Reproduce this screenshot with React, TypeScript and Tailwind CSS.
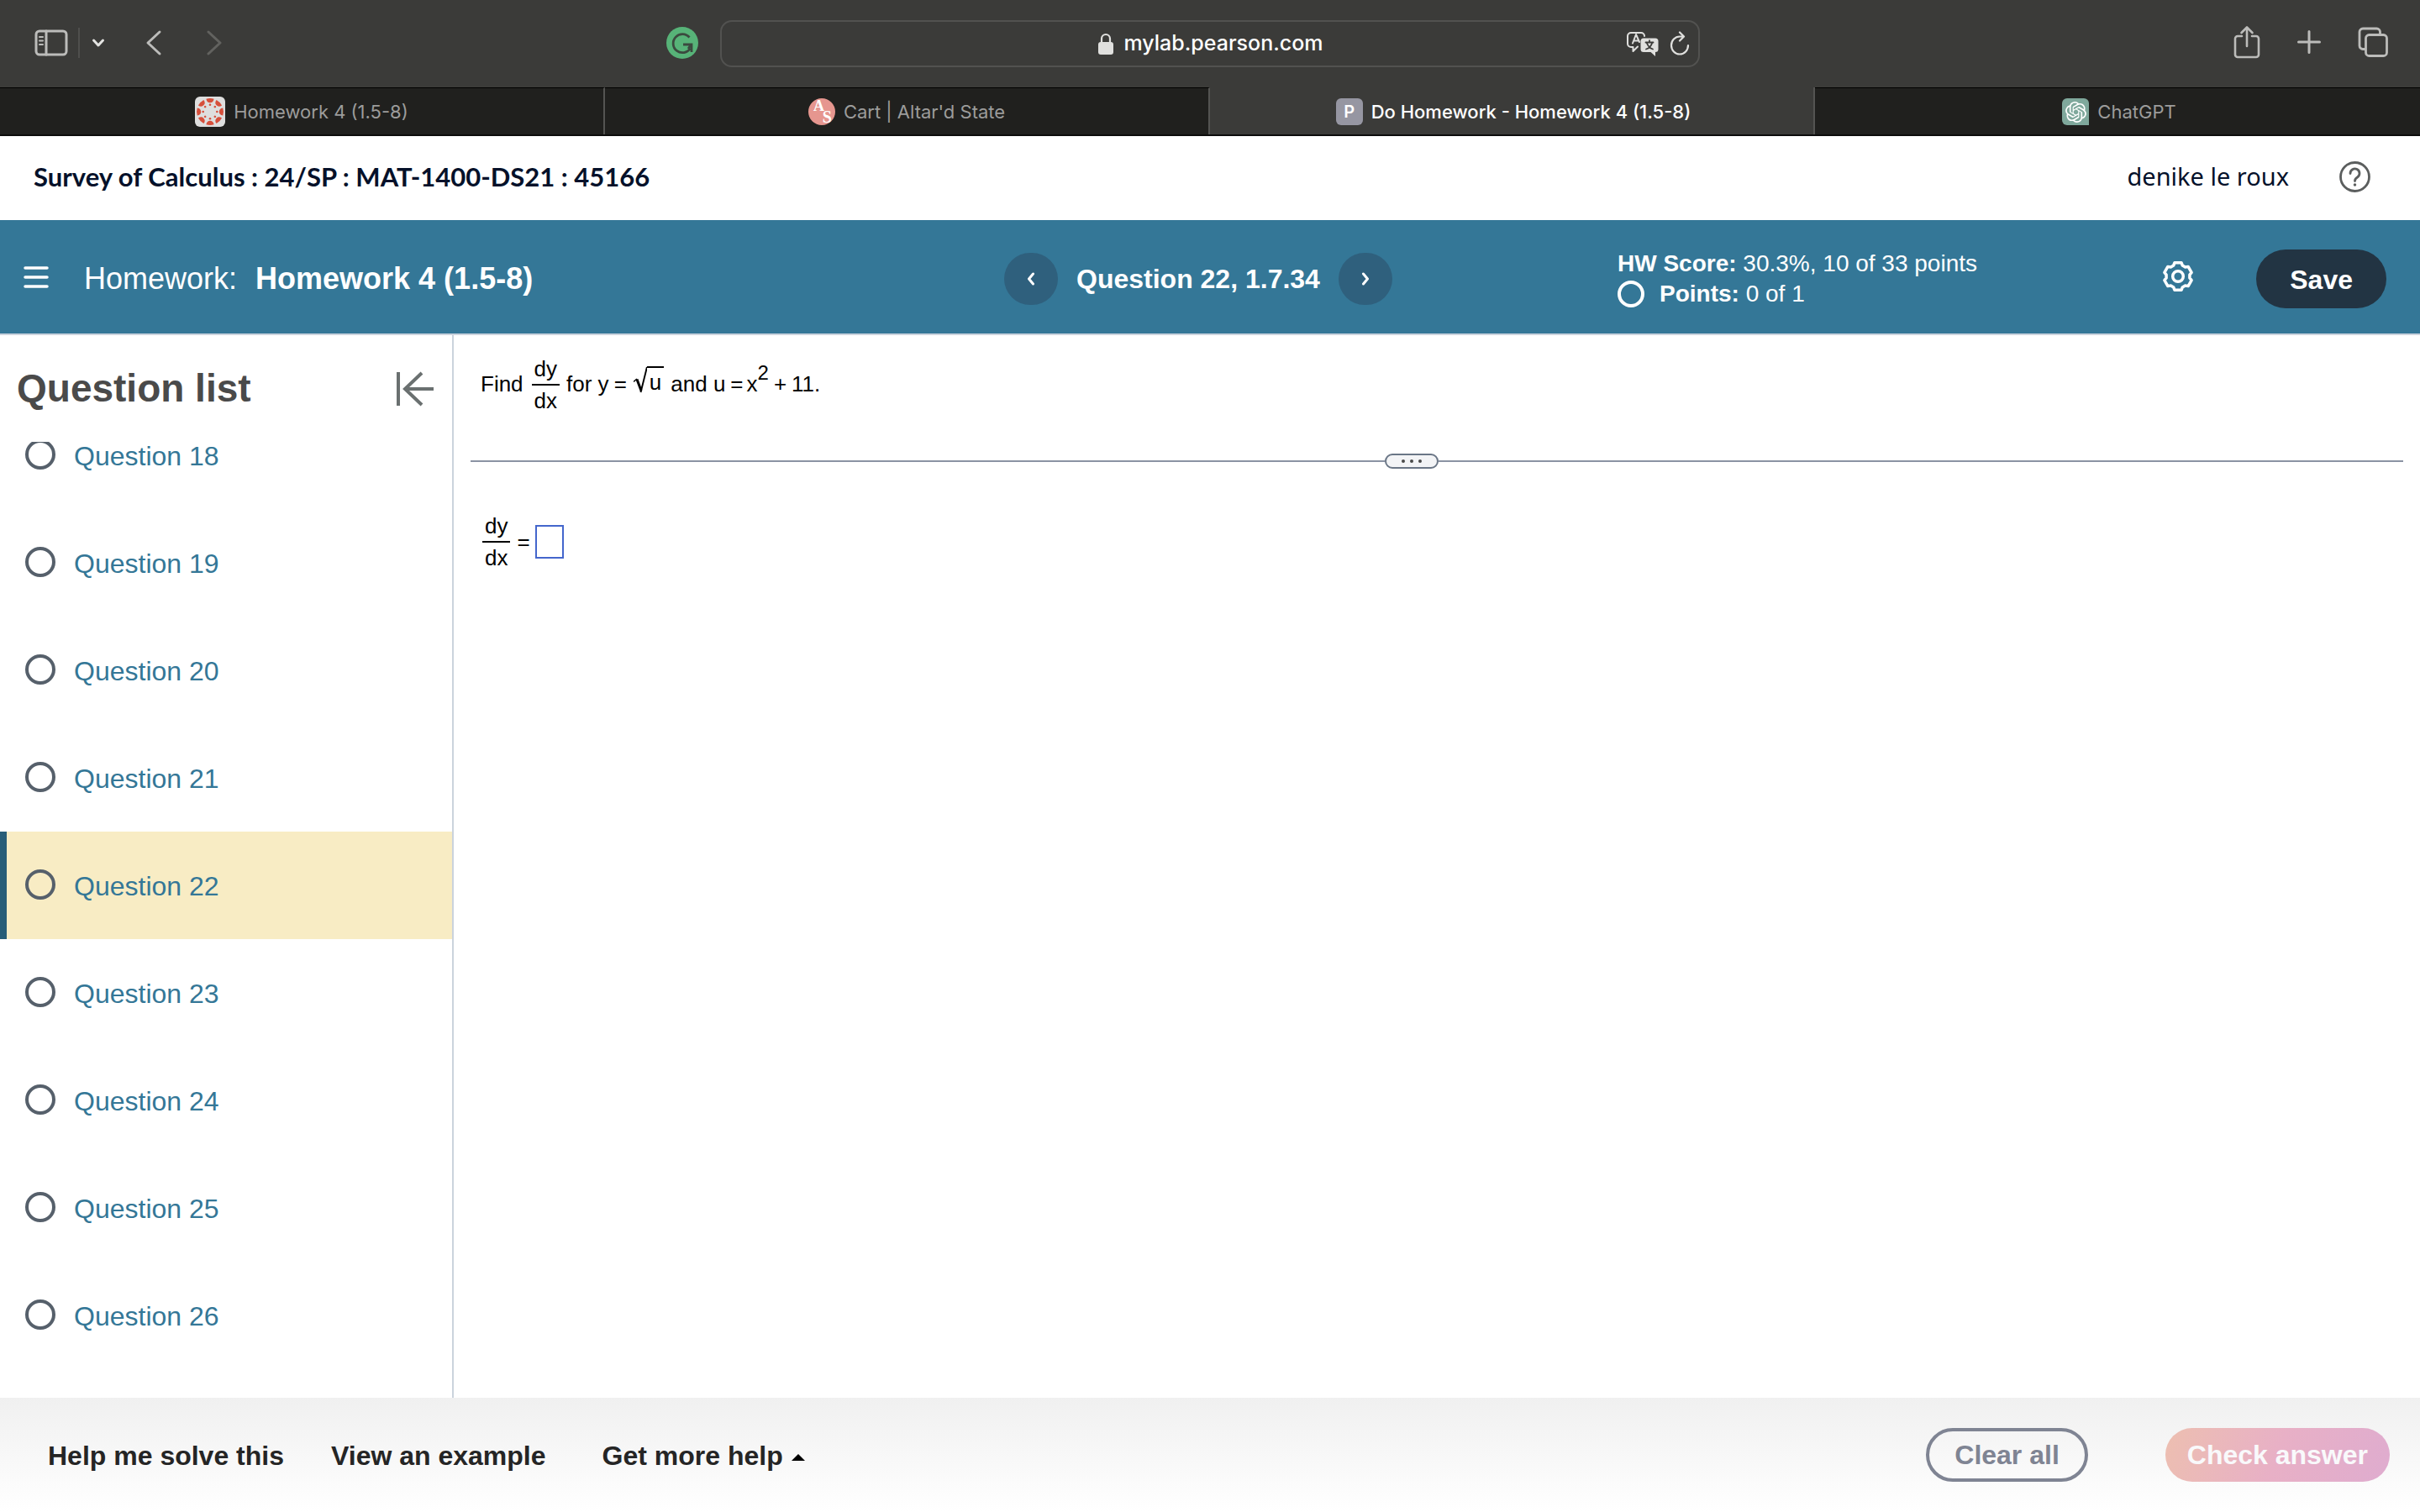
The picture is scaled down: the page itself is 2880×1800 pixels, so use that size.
import React from "react";
import { SiOpenai } from "react-icons/si";

function SidebarIcon() {
  return (
    <svg className="h-8 w-10" viewBox="0 0 40 32" fill="none" stroke="currentColor" strokeWidth="3" strokeLinecap="round">
      <rect x="2" y="2" width="36" height="28" rx="4" />
      <path d="M14 2v28" />
      <path d="M6 9h4M6 13.500h4M6 18h4" strokeWidth="2" />
    </svg>
  );
}

function CanvasLogo() {
  const spokes = [0, 45, 90, 135, 180, 225, 270, 315];
  return (
    <svg className="h-9 w-9 rounded-md bg-[#dedede]" viewBox="-18 -18 36 36" fill="#d64f3b">
      {spokes.map((a) => (
        <g key={a} transform={`rotate(${a})`}>
          <path d="M-4.600-15.300A16 16 0 0 1 4.600-15.300Q3.800-10.800 0-10.800T-4.600-15.300Z" />
          <circle cx="0" cy="-8.300" r="1.300" />
        </g>
      ))}
    </svg>
  );
}

function AltardLogo() {
  return (
    <span className="relative flex h-8 w-8 items-center justify-center rounded-full bg-[#e6968f] font-['Liberation_Serif',serif] font-bold leading-none text-white">
      <span className="absolute left-1.5 top-0 text-[18px]">A</span>
      <span className="absolute bottom-0 right-1 text-[20px]">S</span>
    </span>
  );
}

// One tooth of the gear, pointing up; the outline is this run of points turned six times.
const tooth = [
  [-5.3, -13],
  [-4, -16.3],
  [4, -16.3],
  [5.3, -13],
];
const gearPoints = [0, 1, 2, 3, 4, 5]
  .flatMap((i) => {
    const a = (i * Math.PI) / 3;
    return tooth.map(([x, y]) => `${(x * Math.cos(a) - y * Math.sin(a)).toFixed(2)},${(x * Math.sin(a) + y * Math.cos(a)).toFixed(2)}`);
  })
  .join(" ");

function GearIcon() {
  return (
    <svg className="h-[38px] w-[38px]" viewBox="-19 -19 38 38" fill="none" stroke="#fff" strokeWidth="3.500" strokeLinejoin="round">
      <polygon points={gearPoints} />
      <circle r="6.300" />
    </svg>
  );
}

function Tab({ active, icon, children }: { active?: boolean; icon: React.ReactNode; children: React.ReactNode }) {
  return (
    <button
      className={
        active
          ? "flex items-center justify-center gap-2.5 border-r-2 border-[#545452] pl-1 pt-0.5 font-medium text-white"
          : "flex items-center justify-center gap-2.5 border-r-2 border-t border-r-[#545452] border-t-black bg-[#20201e] pt-px text-[#9c9c9b] last:border-r-0 last:pl-1"
      }
    >
      {icon}
      <span>{children}</span>
    </button>
  );
}

function BrowserChrome() {
  return (
    <div className="border-b-2 border-[#0c0c0c] bg-[#3b3b39] font-[Inter,sans-serif]">
      <div className="grid h-[104px] grid-cols-[857fr_1166fr_857fr] items-center">
        <div className="flex items-center pb-0.5 pl-[41px] pr-[26px] text-[#bcbcba]">
          <button aria-label="Show sidebar"><SidebarIcon /></button>
          <span className="ml-3 h-9 w-0.5 bg-[#4f4f4d]" />
          <button aria-label="Tab groups" className="ml-3.5 text-[#e4e4e2]">
            <svg className="h-4 w-4" viewBox="0 0 16 16" fill="none" stroke="currentColor" strokeWidth="3" strokeLinecap="round" strokeLinejoin="round"><path d="M2.500 5 8 11l5.500-6" /></svg>
          </button>
          <button aria-label="Back" className="ml-12">
            <svg className="h-8 w-5" viewBox="0 0 20 32" fill="none" stroke="currentColor" strokeWidth="3" strokeLinecap="round" strokeLinejoin="round"><path d="M17 3 3 16l14 13" /></svg>
          </button>
          <button aria-label="Forward" className="ml-[52px] text-[#62625f]">
            <svg className="h-8 w-5" viewBox="0 0 20 32" fill="none" stroke="currentColor" strokeWidth="3" strokeLinecap="round" strokeLinejoin="round"><path d="m3 3 14 13L3 29" /></svg>
          </button>
          <button aria-label="Grammarly" className="ml-auto">
            <svg className="h-[38px] w-[38px]" viewBox="0 0 38 38">
              <circle cx="19" cy="19" r="19" fill="#57b378" />
              <path d="M27.500 12.500A11 11 0 1 0 28.500 25.500M20 21h10v9M29.500 21l-3.500 5" fill="none" stroke="#3b4a3f" strokeWidth="2.800" />
            </svg>
          </button>
        </div>
        <div className="flex h-14 items-center rounded-[14px] border-2 border-[#525250] px-2.5 text-[#e0e0de]">
          <div className="flex-1" />
          <div className="flex items-center gap-3 text-[25px] font-medium text-white">
            <svg className="h-[26px] w-5" viewBox="0 0 20 26">
              <path d="M5 12V7a5 5 0 0 1 10 0v5" fill="none" stroke="#e0e0de" strokeWidth="2.200" />
              <rect x="1" y="11" width="18" height="15" rx="3" fill="#e0e0de" />
            </svg>
            mylab.pearson.com
          </div>
          <div className="flex flex-1 items-center justify-end gap-3">
            <button aria-label="Translate">
              <svg className="h-8 w-10" viewBox="0 0 40 32" fill="none" stroke="currentColor" strokeWidth="2" strokeLinejoin="round" strokeLinecap="round">
                <path d="M14 19.500 8.500 25v-5H6a4 4 0 0 1-4-4V7a4 4 0 0 1 4-4h12a4 4 0 0 1 4 4" />
                <path d="m8 15.500 4-10.500 4 9M9.300 12.500h5.400" />
                <path d="M21 9.500h14a3.500 3.500 0 0 1 3.500 3.500v9.500A3.500 3.500 0 0 1 35 26v5l-5.500-5H21a3.500 3.500 0 0 1-3.500-3.500V13A3.500 3.500 0 0 1 21 9.500Z" fill="currentColor" stroke="none" />
                <path d="M23.500 14.500h9M28 12.200v2.300M25 15.500c1.500 4 4 6 7 7M31 15.500c-1.200 4-4 6-7 7" stroke="#3b3b39" strokeWidth="1.800" />
              </svg>
            </button>
            <button aria-label="Reload">
              <svg className="h-[30px] w-6" viewBox="0 0 24 30" fill="none" stroke="currentColor" strokeWidth="2.200" strokeLinecap="round" strokeLinejoin="round">
                <path d="M22 17a10 10.500 0 1 1-10-10.500h4M12 1.500l5 5-5 5" />
              </svg>
            </button>
          </div>
        </div>
        <div className="flex items-center justify-end gap-11 pb-1 pr-[38px] text-[#bcbcba]">
          <button aria-label="Share">
            <svg className="h-10 w-8" viewBox="0 0 32 40" fill="none" stroke="currentColor" strokeWidth="2.600" strokeLinecap="round" strokeLinejoin="round">
              <path d="M10 13H5a3 3 0 0 0-3 3v19a3 3 0 0 0 3 3h22a3 3 0 0 0 3-3V16a3 3 0 0 0-3-3h-5M16 25V3M9.500 9 16 2.500 22.500 9" />
            </svg>
          </button>
          <button aria-label="New tab">
            <svg className="h-7 w-7" viewBox="0 0 28 28" fill="none" stroke="currentColor" strokeWidth="3" strokeLinecap="round"><path d="M14 1.500v25M1.500 14h25" /></svg>
          </button>
          <button aria-label="Tab overview">
            <svg className="h-9 w-9" viewBox="0 0 36 36" fill="none" stroke="currentColor" strokeWidth="2.800">
              <path d="M9 26.500H6a4 4 0 0 1-4-4V6a4 4 0 0 1 4-4h16.500a4 4 0 0 1 4 4v3" />
              <rect x="9.500" y="9.500" width="25" height="25" rx="4" />
            </svg>
          </button>
        </div>
      </div>
      <div className="grid h-14 grid-cols-4 text-[22px]">
        <Tab icon={<CanvasLogo />}>Homework 4 (1.5-8)</Tab>
        <Tab icon={<AltardLogo />}>Cart | Altar'd State</Tab>
        <Tab active icon={<span className="flex h-8 w-8 items-center justify-center rounded-md bg-[#9696a2] text-[20px] font-semibold">P</span>}>
          Do Homework - Homework 4 (1.5-8)
        </Tab>
        <Tab icon={<span className="flex h-8 w-8 items-center justify-center rounded-md rounded-br-none bg-[#7fa89c] text-[25px] text-white"><SiOpenai /></span>}>ChatGPT</Tab>
      </div>
    </div>
  );
}

function Fraction({ top, bottom }: { top: string; bottom: string }) {
  return (
    <span className="inline-flex flex-col items-center">
      <span className="px-[3px] leading-9">{top}</span>
      <span className="h-0.5 w-full bg-black" />
      <span className="px-[3px] leading-9">{bottom}</span>
    </span>
  );
}

function SquareRoot({ children }: { children: React.ReactNode }) {
  return (
    <span className="inline-flex items-start">
      <svg className="h-8 w-4" viewBox="0 0 16 32" fill="none" stroke="#000">
        <path d="M0 18.500 4 15" strokeWidth="1.500" />
        <path d="M4 15.500 9 29" strokeWidth="3" />
        <path d="M8.500 31 16 1" strokeWidth="2" />
      </svg>
      <span className="border-t-2 border-black px-[3px] leading-[34px]">{children}</span>
    </span>
  );
}

function NavButton({ label, d }: { label: string; d: string }) {
  return (
    <button aria-label={label} className="flex h-[62px] w-16 items-center justify-center rounded-full bg-[#2f607d]">
      <svg className="h-4 w-3" viewBox="0 0 12 16" fill="none" stroke="#fff" strokeWidth="3" strokeLinecap="round" strokeLinejoin="round"><path d={d} /></svg>
    </button>
  );
}

const questions = [18, 19, 20, 21, 22, 23, 24, 25, 26];

export default function App() {
  return (
    <div className="flex min-h-screen flex-col bg-white font-['Liberation_Sans',Arial,sans-serif] text-black">
      <BrowserChrome />

      <header className="flex h-[100px] items-center bg-white pb-1 pl-10 pr-[59px] text-[#05112a]">
        <h1 className="font-[Lato,sans-serif] text-[31px] font-bold">Survey of Calculus : 24/SP : MAT-1400-DS21 : 45166</h1>
        <span className="ml-auto font-['Noto_Sans',sans-serif] text-[29px]">denike le roux</span>
        <button aria-label="Help" className="ml-[60px]">
          <svg className="h-[37px] w-[37px]" viewBox="0 0 37 37" fill="none" stroke="#5b5e5e" strokeWidth="2.800" strokeLinecap="round">
            <circle cx="18.500" cy="18.500" r="17" />
            <path d="M13 14.500a5.500 5.500 0 1 1 8.500 4.500c-2 1.300-3 2.200-3 4.500" />
            <circle cx="18.500" cy="28" r="1" fill="#5b5e5e" strokeWidth="1.500" />
          </svg>
        </button>
      </header>

      <div className="grid h-[137px] grid-cols-[239fr_146fr_191fr] items-center border-b-2 border-[#cbd3dd] bg-[#347797] pt-1 text-white">
        <div className="flex items-center pl-7">
          <button aria-label="Menu" className="pb-1">
            <svg className="h-8 w-[30px]" viewBox="0 0 30 32" stroke="#fff" strokeWidth="3.500" strokeLinecap="round"><path d="M2 5h26M2 16h26M2 27h26" /></svg>
          </button>
          <h2 className="ml-[42px] text-[36px]">Homework: <strong className="ml-3">Homework 4 (1.5-8)</strong></h2>
        </div>
        <div className="flex items-center gap-[22px]">
          <NavButton label="Previous question" d="M8.500 2 3.500 8l5 6" />
          <strong className="text-[32px]">Question 22, 1.7.34</strong>
          <NavButton label="Next question" d="m3.500 2 5 6-5 6" />
        </div>
        <div className="flex items-center pr-10 text-[28px] leading-9">
          <div>
            <div><strong>HW Score:</strong> 30.3%, 10 of 33 points</div>
            <div className="flex items-center">
              <span className="mr-[18px] h-8 w-8 rounded-full border-4 border-white" />
              <span><strong>Points:</strong> 0 of 1</span>
            </div>
          </div>
          <button aria-label="Settings" className="ml-auto pb-1.5">
            <GearIcon />
          </button>
          <button className="ml-[74px] h-[70px] rounded-full bg-[#223443] px-10 pt-0.5 text-[32px] font-bold">Save</button>
        </div>
      </div>

      <div className="flex flex-1">
        <aside className="flex w-[540px] flex-col border-r-2 border-[#cbd3dd]">
          <div className="flex h-[127px] items-center justify-between px-5 text-[#4a4a4a]">
            <h2 className="text-[46px] font-bold">Question list</h2>
            <button aria-label="Collapse question list">
              <svg className="h-11 w-12" viewBox="0 0 48 44" fill="none" stroke="#6a7070" strokeWidth="4"><path d="M4 2v40M46 22H11M32 3 12 22l20 19" /></svg>
            </button>
          </div>
          <div className="overflow-hidden">
            <ul className="-mt-12">
              {questions.map((n) => (
                <li key={n}>
                  <a
                    href={`#question-${n}`}
                    className={
                      n === 22
                        ? "flex h-32 items-center border-l-8 border-[#275d78] bg-[#f8ecc4] pl-[22px] pt-0.5 text-[32px] leading-8 text-[#347797]"
                        : "flex h-32 items-center pl-[30px] pt-0.5 text-[32px] leading-8 text-[#347797]"
                    }
                  >
                    <span className="mb-1 mr-[22px] h-9 w-9 rounded-full border-4 border-[#56606b]" />
                    Question {n}
                  </a>
                </li>
              ))}
            </ul>
          </div>
        </aside>

        <main className="flex-1 px-5 text-[26px]">
          <div className="flex h-[141px] items-center px-3 pb-6">
            <span>Find</span>
            <span className="ml-2.5"><Fraction top="dy" bottom="dx" /></span>
            <span className="ml-2">for y</span>
            <span className="ml-1.5">=</span>
            <span className="ml-2"><SquareRoot>u</SquareRoot></span>
            <span className="ml-2">and u</span>
            <span className="ml-1.5">=</span>
            <span className="ml-1">x<sup className="-top-3.5 text-[24px]">2</sup></span>
            <span className="ml-1.5">+</span>
            <span className="ml-1.5">11.</span>
          </div>
          <div className="flex items-center">
            <span className="h-0.5 flex-[109] bg-[#8b93a3]" />
            <button aria-label="Resize panels" className="flex h-[18px] w-16 items-center justify-center gap-1.5 rounded-full border-2 border-[#6a7686] bg-[#f3f4f6]">
              <span className="h-1 w-1 rounded-full bg-[#4a4a4a]" />
              <span className="h-1 w-1 rounded-full bg-[#4a4a4a]" />
              <span className="h-1 w-1 rounded-full bg-[#4a4a4a]" />
            </button>
            <span className="h-0.5 flex-[115] bg-[#8b93a3]" />
          </div>
          <label className="flex items-center px-3.5 pt-[50px]">
            <Fraction top="dy" bottom="dx" />
            <span className="ml-2">=</span>
            <input aria-label="Answer" className="ml-1.5 h-10 w-[34px] border-2 border-[#4466cc]" />
          </label>
        </main>
      </div>

      <footer className="flex h-[136px] items-center bg-linear-to-b from-[#f0f0f0] to-white pl-[57px] pr-9 text-[32px] font-bold text-[#252525]">
        <button className="pt-0.5">Help me solve this</button>
        <button className="ml-14 pt-0.5">View an example</button>
        <button className="ml-[67px] flex items-center gap-2.5 pt-0.5">
          Get more help
          <svg className="mt-1 h-2 w-4" viewBox="0 0 16 8"><path d="M0 8 8 0l8 8z" /></svg>
        </button>
        <button className="ml-auto h-16 rounded-full border-4 border-[#7f8493] px-[30px] text-[#7f8493]">Clear all</button>
        <button className="ml-[92px] h-16 rounded-full bg-linear-110 from-[#edbfb0] via-[#e8b0c6] to-[#dfaccf] px-[26px] text-[#f9f9fb]">Check answer</button>
      </footer>
    </div>
  );
}
